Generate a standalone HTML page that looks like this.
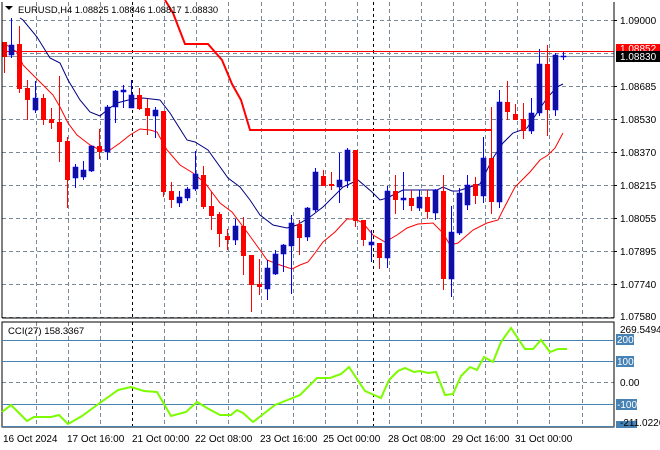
<!DOCTYPE html>
<html><head><meta charset="utf-8"><style>
html,body{margin:0;padding:0;background:#fff;width:660px;height:450px;overflow:hidden}
svg{display:block;font-family:"Liberation Sans",sans-serif;font-size:10px}
</style></head><body>
<svg width="660" height="450" viewBox="0 0 660 450" xmlns="http://www.w3.org/2000/svg">
<rect width="660" height="450" fill="#fff"/>
<g stroke="#778899" stroke-width="1" stroke-dasharray="4,3">
<path d="M2 20.5H614M2 53.5H614M2 86.5H614M2 119.5H614M2 152.5H614M2 185.5H614M2 218.5H614M2 251.5H614M2 284.5H614M2 317.5H614"/>
<path d="M36.5 2V318M68.5 2V318M100.5 2V318M164.5 2V318M196.5 2V318M228.5 2V318M261.5 2V318M293.5 2V318M325.5 2V318M357.5 2V318M389.5 2V318M421.5 2V318M453.5 2V318M485.5 2V318M517.5 2V318M549.5 2V318M582.5 2V318"/>
<path d="M36.5 322V427M68.5 322V427M100.5 322V427M164.5 322V427M196.5 322V427M228.5 322V427M261.5 322V427M293.5 322V427M325.5 322V427M357.5 322V427M389.5 322V427M421.5 322V427M453.5 322V427M485.5 322V427M517.5 322V427M549.5 322V427M582.5 322V427M2 382.5H614"/>
</g>
<g stroke="#000" stroke-dasharray="3,3"><path d="M132.5 2V318M373.5 2V318M132.5 322V427M373.5 322V427"/></g>
<line x1="2" y1="51.5" x2="614" y2="51.5" stroke="#ff0000"/>
<line x1="2" y1="56.5" x2="614" y2="56.5" stroke="#8796a6"/>
<polyline fill="none" stroke="#ff0000" stroke-width="2" points="165,0 173,13 185,44 208,44 222,60 232,84 241,100 250,130 491,130"/>
<polyline fill="none" stroke="#000080" stroke-width="1" points="20,18 23,20 37,37 50,58 60,63 68,80 80,100 90,112 100,116 107,110 117,103 132,99 143,98 160,100 170,113 187,140 195,142 208,150 228,178 240,187 250,200 260,215 273,225 287,228 297,225 310,217 323,207 343,187 358,180 372,192 380,200 387,198 403,190 437,190 443,187 452,191 458,191 470,187 480,184 493,158 503,143 513,133 527,128 537,113 547,98 557,87 563,84"/>
<polyline fill="none" stroke="#ff0000" stroke-width="1" points="3,43 10,47 18,53 23,65 33,75 43,85 53,95 60,107 68,123 77,135 90,145 100,150 110,150 120,143 130,135 140,129 150,130 157,132 167,150 180,165 193,173 205,183 220,203 232,212 247,232 260,250 267,260 280,265 292,269 300,265 308,262 315,253 323,242 335,232 347,219 355,219 363,223 373,235 385,242 397,235 407,228 418,224 433,223 443,233 450,245 458,243 473,230 487,223 498,220 503,210 515,187 530,172 540,160 548,155 555,148 563,133"/>
<path stroke="#ff0000" fill="none" d="M4.5 42V73M19.5 26V93M27.5 80V120M43.5 94V125M51.5 108V129M59.5 76V162M67.5 137V208M99.5 129V159M139.5 88V110M147.5 99V135M163.5 111V197M171.5 182V208M203.5 166V209M211.5 192V230M219.5 212V247M227.5 229V250M243.5 217V275M251.5 255V312M259.5 259V295M299.5 220V255M323.5 170V186M331.5 172V190M355.5 150V227M363.5 220V246M379.5 243V269M395.5 175V214M411.5 190V211M427.5 190V219M443.5 175V290M475.5 177V204M491.5 107V214M507.5 81V120M515.5 104V120M523.5 103V139M547.5 45V136"/>
<path fill="#ff0000" d="M2 42h5v15h-5z M17 44h5v45h-5z M25 88h5v12h-5z M41 98h5v22h-5z M49 119h5v4h-5z M57 122h5v20h-5z M65 141h5v39h-5z M97 146h5v6h-5z M137 95h5v14h-5z M145 108h5v8h-5z M161 111h5v81h-5z M169 191h5v9h-5z M201 175h5v32h-5z M209 206h5v10h-5z M217 214h5v20h-5z M225 236h5v4h-5z M241 226h5v30h-5z M249 255h5v30h-5z M257 284h5v3h-5z M297 224h5v14h-5z M321 176h5v10h-5z M329 184h5v2h-5z M353 150h5v71h-5z M361 220h5v20h-5z M377 243h5v15h-5z M393 191h5v9h-5z M409 198h5v8h-5z M425 197h5v15h-5z M441 191h5v88h-5z M473 184h5v12h-5z M489 158h5v44h-5z M505 102h5v10h-5z M513 114h5v6h-5z M521 119h5v12h-5z M545 64h5v46h-5z"/>
<path stroke="#0000ff" fill="none" d="M11.5 18V58M35.5 81V113M75.5 164V188M83.5 161V180M91.5 146V172M107.5 105V160M115.5 90V123M123.5 85V108M131.5 80V108M155.5 107V138M179.5 191V207M187.5 187V201M195.5 151V191M235.5 219V245M267.5 260V300M275.5 250V275M283.5 244V272M291.5 215V294M307.5 207V241M315.5 168V212M339.5 153V203M347.5 148V188M371.5 230V262M387.5 186V268M403.5 172V210M419.5 190V211M435.5 189V220M451.5 206V297M459.5 188V235M467.5 175V210M483.5 137V203M499.5 90V208M531.5 98V134M539.5 49V116M555.5 53V116M563.5 52V60"/>
<path fill="#10109a" stroke="#0000ff" stroke-width="0.6" d="M9 45h5v10h-5z M33 98h5v12h-5z M73 167h5v11h-5z M81 170h5v7h-5z M89 146h5v25h-5z M105 107h5v45h-5z M113 91h5v16h-5z M121 90h5v2h-5z M129 95h5v13h-5z M153 110h5v6h-5z M177 197h5v6h-5z M185 189h5v9h-5z M193 174h5v15h-5z M233 226h5v14h-5z M265 268h5v21h-5z M273 254h5v20h-5z M281 245h5v9h-5z M289 223h5v23h-5z M305 208h5v29h-5z M313 172h5v38h-5z M337 180h5v7h-5z M345 150h5v31h-5z M369 242h5v3h-5z M385 191h5v67h-5z M401 198h5v2h-5z M417 197h5v11h-5z M433 190h5v23h-5z M449 232h5v47h-5z M457 193h5v40h-5z M465 185h5v20h-5z M481 158h5v38h-5z M497 102h5v100h-5z M529 113h5v18h-5z M537 64h5v49h-5z M553 55h5v55h-5z M561 56h5v1h-5z"/>
<path d="M2 2V318M2 318H614M614 2V318M2 322H614V427H2Z" fill="none" stroke="#000"/>
<g stroke="#4682b4"><path d="M2 340.5H614M2 361.5H614M2 404.5H614M2 426.5H614"/></g>
<polyline fill="none" stroke="#7cfc00" stroke-width="2" points="2,412 11,405 27,421 34,417 51,417 59,415 68,424 82,416 97,405 118,390 131,387 144,391 157,392 171,416 186,412 197,402 207,408 220,415 231,415 237,410 243,413 253,422 275,405 300,395 317,378 330,378 341,374 349,367 365,391 381,398 389,380 398,371 405,368 414,372 420,371 428,373 436,372 445,395 453,394 461,376 470,367 477,370 484,357 493,362 501,342 511,328 525,349 533,349 541,340 550,352 558,349 567,349"/>
<path d="M5 6h8l-4 4z" fill="#000"/>
<text x="18" y="13" fill="#000" font-size="9.4">EURUSD,H4  1.08825 1.08846 1.08817 1.08830</text>
<text x="8" y="334" fill="#000" font-size="9.6">CCI(27) 158.3367</text>
<g fill="#000">
<text x="620" y="24">1.09000</text><text x="620" y="90">1.08685</text><text x="620" y="123">1.08530</text><text x="620" y="156">1.08370</text><text x="620" y="189">1.08215</text><text x="620" y="222">1.08055</text><text x="620" y="255">1.07895</text><text x="620" y="288">1.07740</text><text x="620" y="320">1.07580</text>
</g>
<path d="M614 20.5h3M614 86.5h3M614 119.5h3M614 152.5h3M614 185.5h3M614 218.5h3M614 251.5h3M614 284.5h3" stroke="#000"/>
<rect x="616" y="44" width="44" height="8" fill="#ff0000"/>
<text x="620" y="52" fill="#fff">1.08852</text>
<rect x="616" y="51" width="44" height="11" fill="#000"/>
<text x="620" y="60" fill="#fff">1.08830</text>
<text x="620" y="333" fill="#000">269.5494</text>
<rect x="616" y="334" width="18" height="11" fill="#4682b4"/><text x="617" y="343" fill="#fff">200</text>
<rect x="616" y="356" width="18" height="11" fill="#4682b4"/><text x="617" y="365" fill="#fff">100</text>
<text x="620" y="386" fill="#000">0.00</text>
<rect x="616" y="399" width="21" height="11" fill="#4682b4"/><text x="617" y="408" fill="#fff">-100</text>
<rect x="616" y="421" width="21" height="7" fill="#4682b4"/>
<text x="620" y="426" fill="#000">-211.0226</text>
<g fill="#000">
<text x="3" y="442">16 Oct 2024</text><text x="67" y="442">17 Oct 16:00</text><text x="132" y="442">21 Oct 00:00</text><text x="195" y="442">22 Oct 08:00</text><text x="260" y="442">23 Oct 16:00</text><text x="323" y="442">25 Oct 00:00</text><text x="388" y="442">28 Oct 08:00</text><text x="452" y="442">29 Oct 16:00</text><text x="515" y="442">31 Oct 00:00</text>
</g>
</svg>
</body></html>
